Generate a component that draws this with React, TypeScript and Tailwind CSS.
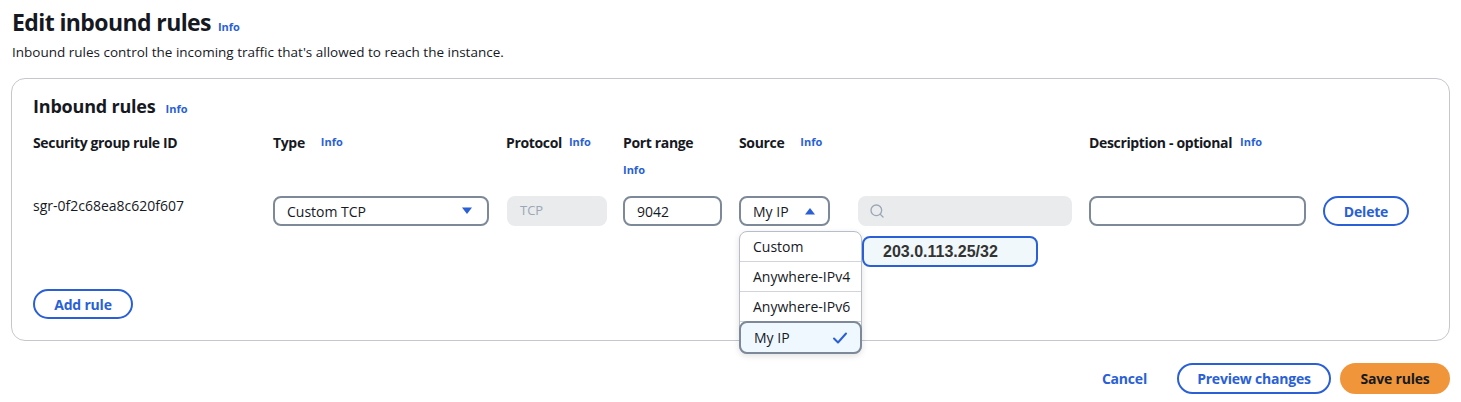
import { Search } from 'lucide-react'

const Info = ({ className = '' }: { className?: string }) => (
	<span className={`text-[11px] font-bold tracking-normal text-[#2a5fd6] ${className}`}>Info</span>
)

const Caret = ({ up = false }: { up?: boolean }) => (
	<svg width="12" height="8" viewBox="0 0 12 8" className="text-[#2a5fd6]">
		{up ? (
			<path d="M1 7.5 L6 1 L11 7.5 Z" fill="currentColor" />
		) : (
			<path d="M1 0.5 L6 7 L11 0.5 Z" fill="currentColor" />
		)}
	</svg>
)

const Header = ({ label, width, info, infoGap = 'ml-2' }: { label: string; width: string; info?: boolean; infoGap?: string }) => (
	<div className={`${width} shrink-0 flex items-center text-[14px] font-bold tracking-[-0.35px] text-[#16191f]`}>
		{label}
		{info && <Info className={infoGap} />}
	</div>
)

const sourceOptions = ['Custom', 'Anywhere-IPv4', 'Anywhere-IPv6']

export default function App() {
	return (
		<div className="w-[1461px] h-[402px] bg-white text-[#16191f] font-['Open_Sans',sans-serif] overflow-hidden">
			<div className="pl-[12px] pt-[7px]">
				<h1 className="flex items-baseline text-[23px] font-bold leading-[30px] tracking-[-0.6px]">
					Edit inbound rules
					<Info className="ml-[7px]" />
				</h1>
				<p className="mt-[1px] text-[13.5px] leading-[18px] text-[#16191f]">
					Inbound rules control the incoming traffic that's allowed to reach the instance.
				</p>
			</div>

			<section className="relative mx-[11px] mt-[17px] h-[263px] rounded-[14px] border border-[#c6c6cd] pl-[21px] pt-[14px]">
				<h2 className="flex items-baseline text-[18px] font-bold leading-[26px] tracking-[-0.2px]">
					Inbound rules
					<Info className="ml-[10px]" />
				</h2>

				<div className="mt-[10px] flex h-[20px] items-center">
					<Header label="Security group rule ID" width="w-[240px]" />
					<Header label="Type" width="w-[233px]" info infoGap="ml-[16px]" />
					<Header label="Protocol" width="w-[117px]" info infoGap="ml-[7px]" />
					<div className="w-[116px] shrink-0 relative text-[14px] font-bold tracking-[-0.35px]">
						Port range
						<Info className="absolute left-0 top-[30px]" />
					</div>
					<Header label="Source" width="w-[350px]" info infoGap="ml-[16px]" />
					<Header label="Description - optional" width="w-[234px]" info infoGap="ml-[8px]" />
				</div>

				<div className="mt-[44px] flex items-start">
					<div className="w-[240px] shrink-0 pt-[1px] text-[14px] leading-[18px]">sgr-0f2c68ea8c620f607</div>
					<div className="w-[233px] shrink-0">
						<div className="flex h-[30px] w-[216px] items-center justify-between rounded-[8px] border-2 border-[#7d8998] pl-[12px] pr-[14px] text-[14px]">
							Custom TCP
							<Caret />
						</div>
					</div>
					<div className="w-[117px] shrink-0 pl-[1px]">
						<div className="flex h-[30px] w-[100px] items-center rounded-[8px] bg-[#e9ebed] pl-[13px] text-[13px] text-[#9ba7b6]">
							TCP
						</div>
					</div>
					<div className="w-[116px] shrink-0">
						<div className="flex h-[30px] w-[99px] items-center rounded-[8px] border-2 border-[#7d8998] pl-[12px] text-[14px]">
							9042
						</div>
					</div>
					<div className="relative flex w-[350px] shrink-0 gap-[28px]">
						<div className="flex h-[30px] w-[91px] items-center justify-between rounded-[8px] border-2 border-[#7d8998] pl-[12px] pr-[12px] text-[14px]">
							My IP
							<Caret up />
						</div>
						<div className="flex h-[30px] w-[214px] items-center rounded-[8px] bg-[#e9ebed] pl-[11px] text-[#9ba7b6]">
							<Search size={16} strokeWidth={2} />
						</div>

						<ul className="absolute left-0 top-[35px] z-10 w-[123px] rounded-[8px] border border-[#b6bec9] bg-white text-[14px] shadow-[0_2px_6px_rgba(0,0,0,0.12)]">
							{sourceOptions.map(option => (
								<li key={option} className="flex h-[30px] items-center border-b border-[#d1d5db] pl-[13px]">
									{option}
								</li>
							))}
							<li className="-m-px flex h-[33px] items-center justify-between rounded-[8px] border-2 border-[#7d8998] bg-[#f0f8ff] pl-[13px] pr-[12px]">
								My IP
								<svg width="16" height="14" viewBox="0 0 16 14" fill="none" stroke="#2a5fd6" strokeWidth="2" strokeLinecap="round" strokeLinejoin="round">
									<path d="M2 7.5 L6 11.5 L14 2.5" />
								</svg>
							</li>
						</ul>

						<div className="absolute left-[123px] top-[40px] z-10 flex h-[31px] w-[176px] items-center rounded-[8px] border-2 border-[#2a5fd6] bg-[#f0f8fb] pl-[19px] font-['Liberation_Sans',sans-serif] text-[16px] font-bold text-[#333]">
							203.0.113.25/32
						</div>
					</div>
					<div className="w-[234px] shrink-0">
						<div className="h-[30px] w-[217px] rounded-[8px] border-2 border-[#7d8998]" />
					</div>
					<button className="flex h-[30px] w-[86px] items-center justify-center rounded-full border-2 border-[#2a5fd6] text-[14px] font-bold tracking-[-0.2px] text-[#2a5fd6]">
						Delete
					</button>
				</div>

				<button className="mt-[63px] flex h-[30px] w-[100px] items-center justify-center rounded-full border-2 border-[#2a5fd6] text-[14px] font-bold tracking-[-0.2px] text-[#2a5fd6]">
					Add rule
				</button>
			</section>

			<footer className="mt-[22px] flex items-center justify-end pr-[11px]">
				<button className="mr-[30px] text-[14px] font-bold tracking-[-0.2px] text-[#2a5fd6]">Cancel</button>
				<button className="mr-[9px] flex h-[31px] w-[154px] items-center justify-center rounded-full border-2 border-[#2a5fd6] text-[14px] font-bold tracking-[-0.2px] text-[#2a5fd6]">
					Preview changes
				</button>
				<button className="flex h-[31px] w-[110px] items-center justify-center rounded-full bg-[#f0953a] text-[14px] font-bold tracking-[-0.2px] text-[#16191f]">
					Save rules
				</button>
			</footer>
		</div>
	)
}
